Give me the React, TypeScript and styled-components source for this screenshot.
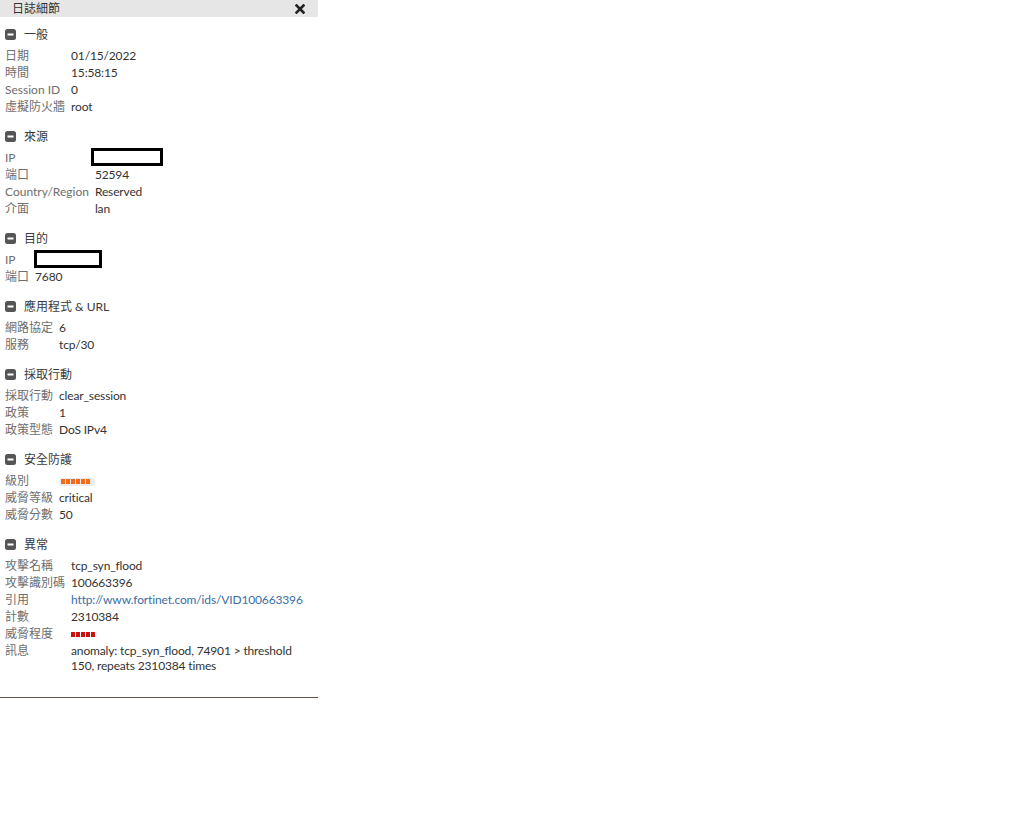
import React from "react";
import styled, { createGlobalStyle } from "styled-components";

const Global = createGlobalStyle`
  html, body { margin: 0; padding: 0; background: #fff; }
  body { font-family: Lato, "Noto Sans CJK TC", sans-serif; font-size: 12px; color: #333; }
`;

const Panel = styled.div`
  width: 318px;
  background: #fff;
  display: flex;
  flex-direction: column;
`;

const TitleBar = styled.div`
  height: 17px;
  background: #e6e6e6;
  display: flex;
  align-items: center;
  justify-content: space-between;
  padding: 0 12px 0 12px;
  color: #333;
  font-size: 12px;
  line-height: 17px;
`;

const CloseBtn = styled.span`
  display: flex;
  align-items: center;
  margin-right: 1px;
`;

const Section = styled.section`
  padding: 10px 8px 4px 5px;
  display: flex;
  flex-direction: column;
  gap: 5px;
`;

const SectionHead = styled.div`
  display: flex;
  align-items: center;
  gap: 8px;
  height: 15px;
  line-height: 15px;
  color: #3a3a3a;
  font-size: 12px;
`;

const Grid = styled.div`
  display: grid;
  grid-template-columns: auto 1fr;
  column-gap: 6px;
`;

const Label = styled.div`
  color: #6e6e6e;
  line-height: 15px;
  padding: 1px 0;
  white-space: nowrap;
`;

const Value = styled.div`
  color: #333;
  line-height: 15px;
  padding: 1px 0;
  min-width: 0;
  letter-spacing: -0.15px;
`;

const Link = styled.a`
  color: #3a6ea5;
  text-decoration: none;
  white-space: nowrap;
`;

const Redacted = styled.span<{ $w: number; $shift: number }>`
  display: inline-block;
  box-sizing: border-box;
  width: ${(p) => p.$w}px;
  height: 18px;
  border: 3px solid #000;
  margin: -2px 0 -1px ${(p) => p.$shift}px;
  vertical-align: top;
`;

const Track = styled.span`
  display: inline-flex;
  align-items: center;
  gap: 1px;
  width: 36px;
  height: 8px;
  padding: 0 2px;
  box-sizing: border-box;
  background: #ececec;
  border-radius: 3px;
  vertical-align: middle;
`;

const Dots = styled.span`
  display: inline-flex;
  gap: 1px;
  vertical-align: middle;
`;

const Dot = styled.span<{ $c: string }>`
  width: 4px;
  height: 5px;
  background: ${(p) => p.$c};
`;

const Footer = styled.div`
  margin-top: 19px;
  border-top: 1px solid #5b534c;
  width: 318px;
`;

const MinusIcon = () => (
  <svg width="11" height="11" viewBox="0 0 11 11">
    <rect x="0" y="0" width="11" height="11" rx="2.5" fill="#555" />
    <rect x="2.5" y="4.5" width="6" height="2" fill="#fff" />
  </svg>
);

const CloseIcon = () => (
  <svg width="10" height="10" viewBox="0 0 10 10">
    <path d="M1.5 1.5 L8.5 8.5 M8.5 1.5 L1.5 8.5" stroke="#222" strokeWidth="2.6" strokeLinecap="square" />
  </svg>
);

type Row = [string, React.ReactNode];

const Block = ({ title, rows }: { title: string; rows: Row[] }) => (
  <Section>
    <SectionHead>
      <MinusIcon />
      <span>{title}</span>
    </SectionHead>
    <Grid>
      {rows.map(([l, v], i) => (
        <React.Fragment key={i}>
          <Label>{l}</Label>
          <Value>{v}</Value>
        </React.Fragment>
      ))}
    </Grid>
  </Section>
);

const orangeBar = (
  <Track>
    {Array.from({ length: 6 }).map((_, i) => (
      <Dot key={i} $c="#f26b1d" />
    ))}
  </Track>
);

const redBar = (
  <Dots>
    {Array.from({ length: 5 }).map((_, i) => (
      <Dot key={i} $c="#cc1111" />
    ))}
  </Dots>
);

export default function App() {
  return (
    <>
      <Global />
      <Panel>
        <TitleBar>
          <span>日誌細節</span>
          <CloseBtn>
            <CloseIcon />
          </CloseBtn>
        </TitleBar>
        <Block
          title="一般"
          rows={[
            ["日期", "01/15/2022"],
            ["時間", "15:58:15"],
            ["Session ID", "0"],
            ["虛擬防火牆", "root"],
          ]}
        />
        <Block
          title="來源"
          rows={[
            ["IP", <Redacted $w={72} $shift={-4} />],
            ["端口", "52594"],
            ["Country/Region", "Reserved"],
            ["介面", "lan"],
          ]}
        />
        <Block
          title="目的"
          rows={[
            ["IP", <Redacted $w={68} $shift={-1} />],
            ["端口", "7680"],
          ]}
        />
        <Block
          title="應用程式 & URL"
          rows={[
            ["網路協定", "6"],
            ["服務", "tcp/30"],
          ]}
        />
        <Block
          title="採取行動"
          rows={[
            ["採取行動", "clear_session"],
            ["政策", "1"],
            ["政策型態", "DoS IPv4"],
          ]}
        />
        <Block
          title="安全防護"
          rows={[
            ["級別", orangeBar],
            ["威脅等級", "critical"],
            ["威脅分數", "50"],
          ]}
        />
        <Block
          title="異常"
          rows={[
            ["攻擊名稱", "tcp_syn_flood"],
            ["攻擊識別碼", "100663396"],
            ["引用", <Link href="#">http://www.fortinet.com/ids/VID100663396</Link>],
            ["計數", "2310384"],
            ["威脅程度", redBar],
            ["訊息", "anomaly: tcp_syn_flood, 74901 > threshold 150, repeats 2310384 times"],
          ]}
        />
        <Footer />
      </Panel>
    </>
  );
}
